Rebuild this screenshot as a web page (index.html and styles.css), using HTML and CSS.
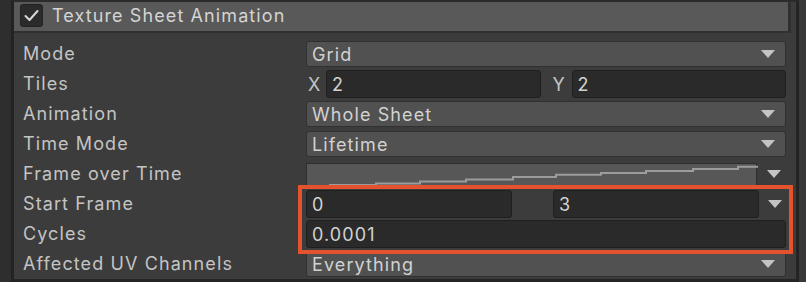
FILE: index.html
```html
<!DOCTYPE html>
<html>
<head>
<meta charset="utf-8">
<link rel="stylesheet" href="styles.css">
</head>
<body>
<div class="frame">
  <div class="gutter"></div>
  <div class="panel">
    <div class="header">
      <span class="check">
        <svg width="15" height="13" viewBox="0 0 15 13"><path d="M1.5 7 L5.5 11 L13.5 2" fill="none" stroke="#d8d8d8" stroke-width="2" stroke-linecap="round" stroke-linejoin="round"/></svg>
      </span>
      <span class="title">Texture Sheet Animation</span>
    </div>
    <div class="rows">
      <div class="row">
        <span class="label">Mode</span>
        <div class="dropdown"><span>Grid</span><i class="arrow"></i></div>
      </div>
      <div class="row">
        <span class="label">Tiles</span>
        <div class="pair">
          <span class="axis">X</span><div class="field">2</div>
          <span class="axis axis-y">Y</span><div class="field">2</div>
        </div>
      </div>
      <div class="row">
        <span class="label">Animation</span>
        <div class="dropdown"><span>Whole Sheet</span><i class="arrow"></i></div>
      </div>
      <div class="row">
        <span class="label">Time Mode</span>
        <div class="dropdown"><span>Lifetime</span><i class="arrow"></i></div>
      </div>
      <div class="row">
        <span class="label">Frame over Time</span>
        <div class="curve-line">
          <div class="curve">
            <svg width="451" height="24" viewBox="0 0 451 24"><polyline fill="none" stroke="#9c9c9c" stroke-width="2" points="0,22.5 23,22.5 23,21 69,21 69,19.5 113,19.5 113,17.5 159,17.5 159,15.5 206,15.5 206,13 249,13 249,10.7 294,10.7 294,9 339,9 339,7 386,7 386,5 431,5 431,2.7 451,2.7"/></svg>
          </div>
          <span class="side-arrow"><i class="arrow"></i></span>
        </div>
      </div>
      <div class="group">
        <div class="row">
          <span class="label">Start Frame</span>
          <div class="curve-line">
            <div class="twin">
              <div class="field">0</div>
              <div class="field">3</div>
            </div>
            <span class="side-arrow"><i class="arrow"></i></span>
          </div>
        </div>
        <div class="row">
          <span class="label">Cycles</span>
          <div class="field">0.0001</div>
        </div>
      </div>
      <div class="row">
        <span class="label">Affected UV Channels</span>
        <div class="dropdown"><span>Everything</span><i class="arrow"></i></div>
      </div>
    </div>
  </div>
  <div class="scroll"></div>
</div>
</body>
</html>
```
FILE: styles.css
```css
* { box-sizing: border-box; }
html, body { margin: 0; padding: 0; }
body {
  width: 806px;
  height: 282px;
  overflow: hidden;
  background: #2d2d2d;
  font-family: Inter, "Noto Sans", sans-serif;
  font-size: 18px;
  letter-spacing: 1.1px;
  color: #c8c8c8;
}
.frame {
  display: flex;
  height: 282px;
}
.gutter {
  width: 11px;
  background: #2e2e2e;
}
.panel {
  width: 788px;
  background: #3c3c3c;
  border-left: 3px solid #232323;
  border-right: 3px solid #242424;
  border-top: 2px solid #2b2b2b;
  border-bottom: 3px solid #252525;
  display: flex;
  flex-direction: column;
}
.scroll {
  flex: 1;
  background: #383838;
}
.header {
  height: 31px;
  margin-right: 5px;
  background: #595959;
  border-bottom: 2px solid #303030;
  border-right: 3px solid #2f2f2f;
  border-radius: 0 3px 0 0;
  display: flex;
  align-items: center;
  padding-left: 6px;
  gap: 9px;
}
.check {
  width: 23px;
  height: 23px;
  background: #2b2b2b;
  border: 1px solid #222;
  border-radius: 3px;
  display: flex;
  align-items: center;
  justify-content: center;
  margin-top: -2px;
}
.title {
  color: #d4d4d4;
  margin-top: -2px;
}
.rows {
  margin-top: 6px;
  display: flex;
  flex-direction: column;
}
.row {
  height: 30px;
  display: grid;
  grid-template-columns: 283px 1fr;
  align-items: center;
  padding-left: 9px;
  padding-right: 10px;
}
.label {
  color: #c4c4c4;
  white-space: nowrap;
  margin-top: -1px;
}
.dropdown {
  height: 26px;
  background: #515151;
  border: 1px solid #303030;
  border-radius: 3px;
  display: flex;
  align-items: center;
  justify-content: space-between;
  padding: 0 10px 0 5px;
  color: #d2d2d2;
}
.arrow {
  display: block;
  width: 0;
  height: 0;
  border-left: 7px solid transparent;
  border-right: 7px solid transparent;
  border-top: 8px solid #c4c4c4;
}
.field {
  height: 28px;
  background: #2a2a2a;
  border: 1px solid #1f1f1f;
  border-radius: 3px;
  display: flex;
  align-items: center;
  padding-left: 5px;
  color: #d2d2d2;
}
.pair {
  display: grid;
  grid-template-columns: 20px 1fr 31px 1fr;
  align-items: center;
}
.axis {
  padding-left: 2px;
  color: #c4c4c4;
}
.axis-y {
  padding-left: 12px;
}
.curve-line {
  display: flex;
  align-items: center;
}
.curve {
  width: 451px;
  height: 25px;
  background: #575757;
  border: 1px solid #2e2e2e;
  border-bottom: none;
  margin-top: 2px;
}
.curve svg { display: block; }
.side-arrow {
  flex: 1;
  display: flex;
  justify-content: center;
  padding-left: 4px;
}
.twin {
  width: 453px;
  display: grid;
  grid-template-columns: 206px 206px;
  justify-content: space-between;
}
.group {
  position: relative;
}
.group::after {
  content: "";
  position: absolute;
  top: -4px;
  bottom: -5px;
  left: 284px;
  right: 3px;
  border: 4px solid #e5532e;
  pointer-events: none;
}
```
